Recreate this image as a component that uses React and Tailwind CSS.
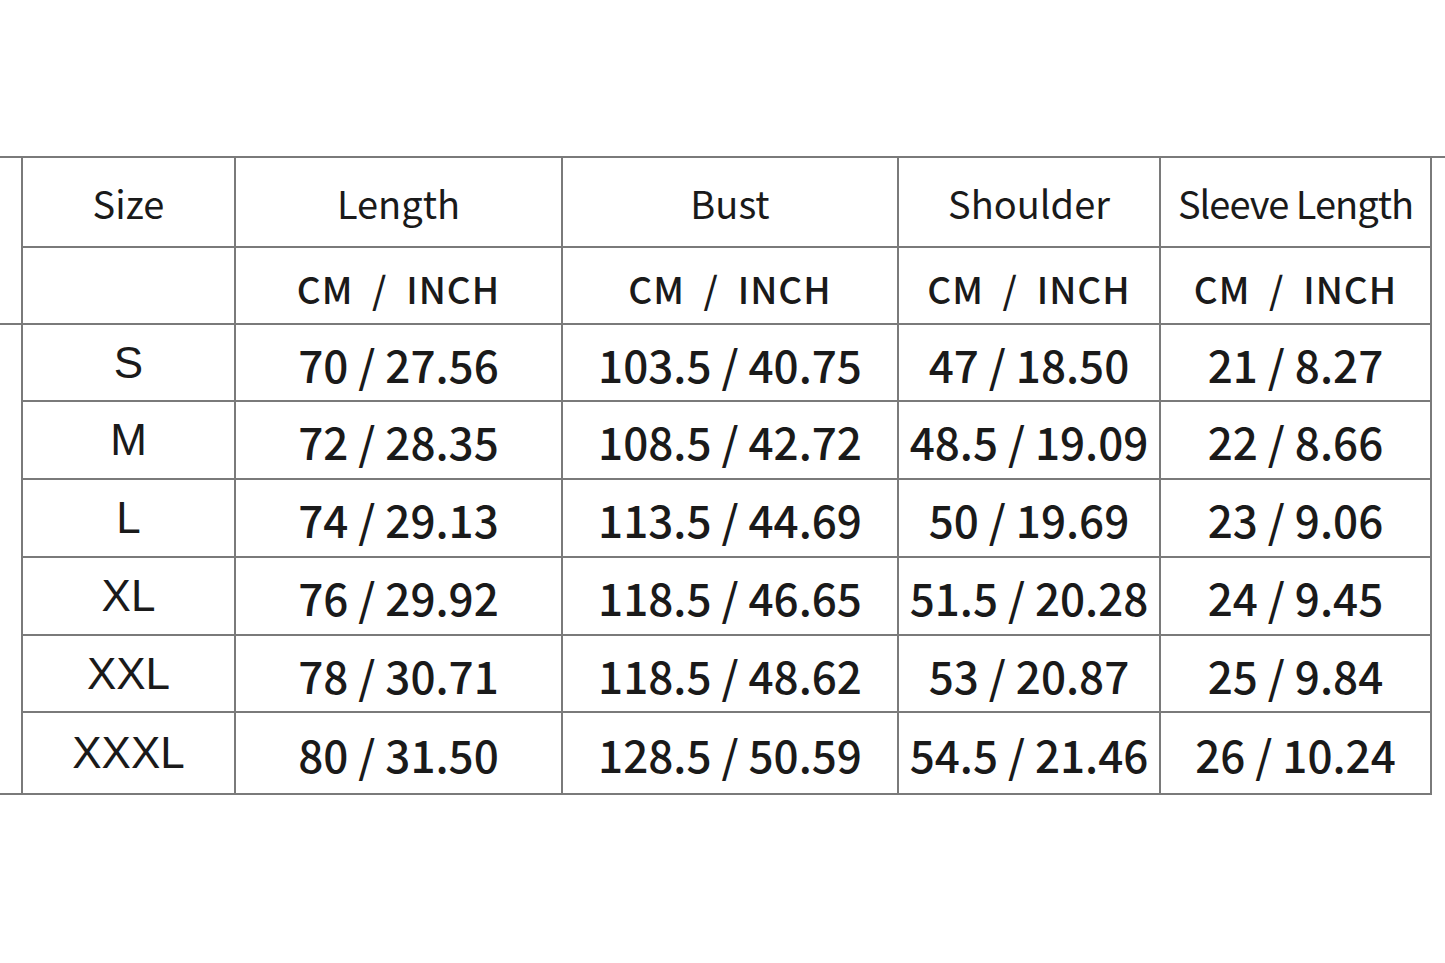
import React from "react";

const rows = [
  ["S", "70 / 27.56", "103.5 / 40.75", "47 / 18.50", "21 / 8.27"],
  ["M", "72 / 28.35", "108.5 / 42.72", "48.5 / 19.09", "22 / 8.66"],
  ["L", "74 / 29.13", "113.5 / 44.69", "50 / 19.69", "23 / 9.06"],
  ["XL", "76 / 29.92", "118.5 / 46.65", "51.5 / 20.28", "24 / 9.45"],
  ["XXL", "78 / 30.71", "118.5 / 48.62", "53 / 20.87", "25 / 9.84"],
  ["XXXL", "80 / 31.50", "128.5 / 50.59", "54.5 / 21.46", "26 / 10.24"],
];

const heights = ["h-[77px]", "h-[78px]", "h-[78px]", "h-[78px]", "h-[77px]", "h-[82px]"];

const cell = "border-2 border-[#7a7a7a] text-center align-middle p-0";

export default function App() {
  return (
    <div
      className="w-[1445px] h-[963px] bg-white text-[#1a1a1a] pt-[156px]"
      style={{ fontFamily: '"Noto Sans CJK SC", "Noto Sans", sans-serif' }}
    >
      <div className="flex">
        {/* left stubs of the ruled lines */}
        <div className="w-[21px] flex flex-col">
          <div className="h-[169px] border-t-2 border-b-2 border-[#7a7a7a]"></div>
          <div className="flex-1 border-b-2 border-[#7a7a7a]"></div>
        </div>
        <table className="border-collapse">
          <colgroup>
            <col className="w-[213px]" />
            <col className="w-[327px]" />
            <col className="w-[336px]" />
            <col className="w-[262px]" />
            <col className="w-[271px]" />
          </colgroup>
          <thead>
            <tr className="h-[90px] text-[38px]">
              <th className={cell + " font-normal"}>Size</th>
              <th className={cell + " font-normal"}>Length</th>
              <th className={cell + " font-normal"}>Bust</th>
              <th className={cell + " font-normal"}>Shoulder</th>
              <th className={cell + " font-normal tracking-[-1px]"}>Sleeve Length</th>
            </tr>
            <tr className="h-[77px] text-[37px] tracking-[1px]">
              <th className={cell}></th>
              {[0, 1, 2, 3].map((i) => (
                <th key={i} className={cell + " font-medium pt-[6px]"}>
                  CM&nbsp;&nbsp;/&nbsp;&nbsp;INCH
                </th>
              ))}
            </tr>
          </thead>
          <tbody>
            {rows.map((r, i) => (
              <tr key={r[0]} className={heights[i] + " text-[44px] font-medium"}>
                <td
                  className={cell + " text-[44px] font-normal"}
                  style={{ fontFamily: '"Liberation Sans", Arial, sans-serif' }}
                >
                  {r[0]}
                </td>
                {r.slice(1).map((v, j) => (
                  <td key={j} className={cell + " pt-[2px]"}>
                    {v}
                  </td>
                ))}
              </tr>
            ))}
          </tbody>
        </table>
        <div className="flex-1 border-t-2 border-[#7a7a7a] self-start"></div>
      </div>
    </div>
  );
}
